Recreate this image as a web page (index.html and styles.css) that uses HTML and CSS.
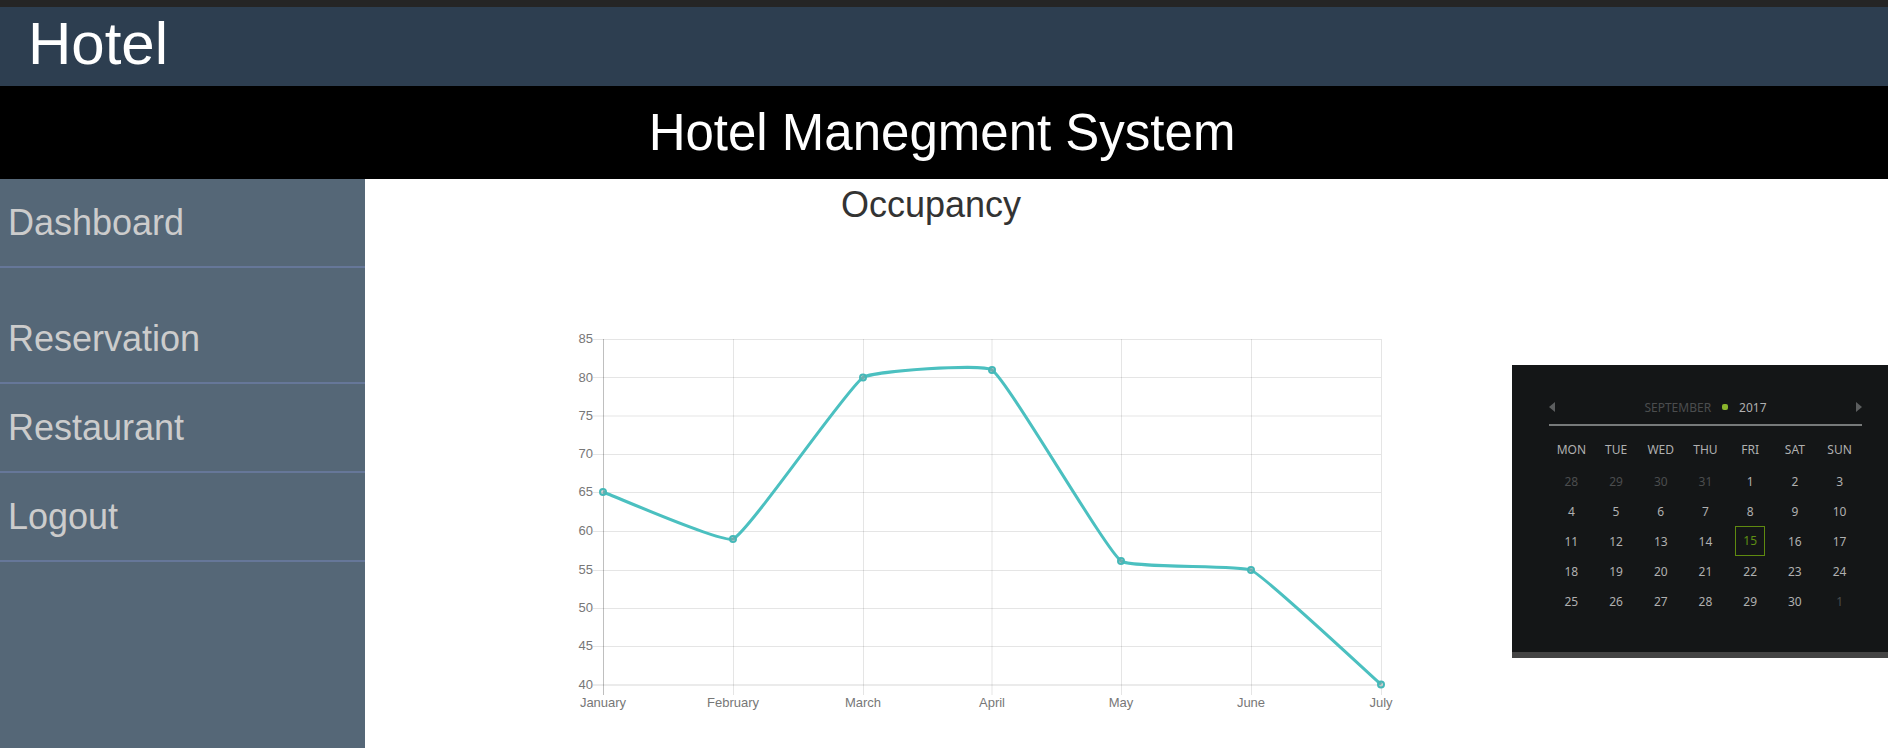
FILE: index.html
```html
<!DOCTYPE html>
<html lang="en">
<head>
<meta charset="utf-8">
<title>Hotel Manegment System</title>
<link rel="stylesheet" href="styles.css">
</head>
<body>
<header class="navbar"><a class="brand" href="#">Hotel</a></header>
<h1 class="banner">Hotel Manegment System</h1>
<div class="layout">
  <nav class="sidebar">
    <a class="menu-link menu-link-home" href="#">Dashboard</a>
    <a class="menu-link" href="#">Reservation</a>
    <a class="menu-link" href="#">Restaurant</a>
    <a class="menu-link" href="#">Logout</a>
  </nav>
  <main class="content">
    <h2 class="chart-title">Occupancy</h2>
    <div class="chart-box">
      <svg class="chart" viewBox="0 0 862 390" role="img" aria-label="Occupancy by month">
        <path class="grid" d="M38 19.5H826M38 57.5H826M38 96H826M38 134.5H826M38 172.5H826M38 211.5H826M38 250.5H826M38 288.5H826M38 326.5H826"/>
        <path class="grid" d="M178.5 19V375M308.5 19V375M437 19V375M566.5 19V375M696.5 19V375M826.5 19V375"/>
        <path class="axis" d="M48.5 19V375"/>
        <path class="axis-base" d="M38 365H826"/>
        <path class="line" d="M48 172C61 176.7 167.6 223.6 178 219C193.6 212.1 292.1 67.9 308 57.5C318 51 427.7 43.4 437 50C453.5 61.7 549.4 228.2 566 241C575.3 248.2 684.8 244.7 696 250C710.8 257 813 353 826 364.5"/>
        <g class="points">
          <circle cx="48" cy="172" r="3"/><circle cx="178" cy="219" r="3"/><circle cx="308" cy="57.5" r="3"/><circle cx="437" cy="50" r="3"/><circle cx="566" cy="241" r="3"/><circle cx="696" cy="250" r="3"/><circle cx="826" cy="364.5" r="3"/>
        </g>
        <g class="label label-y">
          <text x="38" y="23">85</text><text x="38" y="62">80</text><text x="38" y="100">75</text><text x="38" y="138">70</text><text x="38" y="176">65</text><text x="38" y="215">60</text><text x="38" y="254">55</text><text x="38" y="292">50</text><text x="38" y="330">45</text><text x="38" y="369">40</text>
        </g>
        <g class="label label-x">
          <text x="48" y="387">January</text><text x="178" y="387">February</text><text x="308" y="387">March</text><text x="437" y="387">April</text><text x="566" y="387">May</text><text x="696" y="387">June</text><text x="826" y="387">July</text>
        </g>
      </svg>
    </div>
  </main>
  <aside class="side">
    <section class="calendar" aria-label="Calendar">
      <div class="calendar-head">
        <button class="arrow" type="button" aria-label="Previous month"><svg width="6" height="10" viewBox="0 0 6 10"><path d="M6 0V10L0 5Z"/></svg></button>
        <div class="calendar-title"><span class="month">SEPTEMBER</span><span class="dot"></span><span class="year">2017</span></div>
        <button class="arrow" type="button" aria-label="Next month"><svg width="6" height="10" viewBox="0 0 6 10"><path d="M0 0V10L6 5Z"/></svg></button>
      </div>
      <table class="days">
        <thead><tr><th>MON</th><th>TUE</th><th>WED</th><th>THU</th><th>FRI</th><th>SAT</th><th>SUN</th></tr></thead>
        <tbody>
          <tr><td class="out">28</td><td class="out">29</td><td class="out">30</td><td class="out">31</td><td>1</td><td>2</td><td>3</td></tr>
          <tr><td>4</td><td>5</td><td>6</td><td>7</td><td>8</td><td>9</td><td>10</td></tr>
          <tr><td>11</td><td>12</td><td>13</td><td>14</td><td><span class="today">15</span></td><td>16</td><td>17</td></tr>
          <tr><td>18</td><td>19</td><td>20</td><td>21</td><td>22</td><td>23</td><td>24</td></tr>
          <tr><td>25</td><td>26</td><td>27</td><td>28</td><td>29</td><td>30</td><td class="out">1</td></tr>
        </tbody>
      </table>
    </section>
  </aside>
</div>
</body>
</html>
```
FILE: styles.css
```css
* { box-sizing: border-box; }
body {
  margin: 0;
  min-height: 100vh;
  display: flex;
  flex-direction: column;
  background: #fff;
  color: #333;
  font-family: "Liberation Sans", Arial, sans-serif;
}
h1, h2 { margin: 0; font-weight: 400; }
a { text-decoration: none; }

.navbar {
  border-top: 7px solid #252525;
  padding: 0 28px 6px;
  background: #2d3e50;
}
.brand {
  display: block;
  color: #fff;
  font-size: 60px;
  line-height: 73px;
}
.banner {
  padding-right: 4px;
  background: #000;
  color: #fff;
  font-size: 51px;
  line-height: 93px;
  text-align: center;
}

.layout {
  flex: 1;
  display: grid;
  grid-template-columns: 365px minmax(0, 1fr) 391px;
}
.sidebar { background: #556777; }
.menu-link {
  display: block;
  padding-left: 8px;
  border-bottom: 2px solid #667799;
  color: #ccc;
  font-size: 36px;
  line-height: 87px;
}
.menu-link-home { margin-bottom: 27px; }

.chart-title {
  font-size: 36px;
  line-height: 52px;
  text-align: center;
}
.chart-box { padding: 89px 80px 0 190px; }
.chart { display: block; width: 100%; overflow: visible; }
.grid { fill: none; stroke: rgba(0, 0, 0, 0.1); }
.axis { stroke: rgba(0, 0, 0, 0.25); }
.axis-base { stroke: rgba(0, 0, 0, 0.16); }
.line { fill: none; stroke: #4bc0c0; stroke-width: 3; stroke-linejoin: round; }
.points { fill: rgba(150, 150, 150, 0.4); stroke: #45b8b8; stroke-width: 2; }
.label { fill: #777; font-size: 13px; }
.label-y { text-anchor: end; }
.label-x { text-anchor: middle; }

.side { padding: 186px 0 0 15px; }
.calendar {
  padding: 28px 26px 36px 37px;
  border-bottom: 6px solid #444;
  background: #141617;
  color: #b0b0b0;
  font-family: "Noto Sans", sans-serif;
  font-size: 12px;
}
.calendar-head {
  display: flex;
  align-items: center;
  justify-content: space-between;
  height: 33px;
  padding-bottom: 3px;
  border-bottom: 2px solid #777a7a;
}
.arrow {
  display: flex;
  padding: 0;
  border: 0;
  background: none;
  fill: #5c5e5f;
}
.calendar-title { display: flex; align-items: center; gap: 11px; }
.month { color: #4b4d4e; }
.dot { width: 6px; height: 6px; border-radius: 2px; background: #8ab42c; }
.days {
  width: 100%;
  margin-top: 6px;
  border-collapse: collapse;
  table-layout: fixed;
}
.days th, .days td { padding: 0; text-align: center; font-weight: 400; }
.days th { height: 34px; }
.days td { height: 30px; }
.days .out { color: #4b4d4e; }
.today {
  display: block;
  width: 30px;
  margin: 0 auto;
  border: 1px solid #5f8a10;
  color: #5f8f14;
  line-height: 28px;
}
```
